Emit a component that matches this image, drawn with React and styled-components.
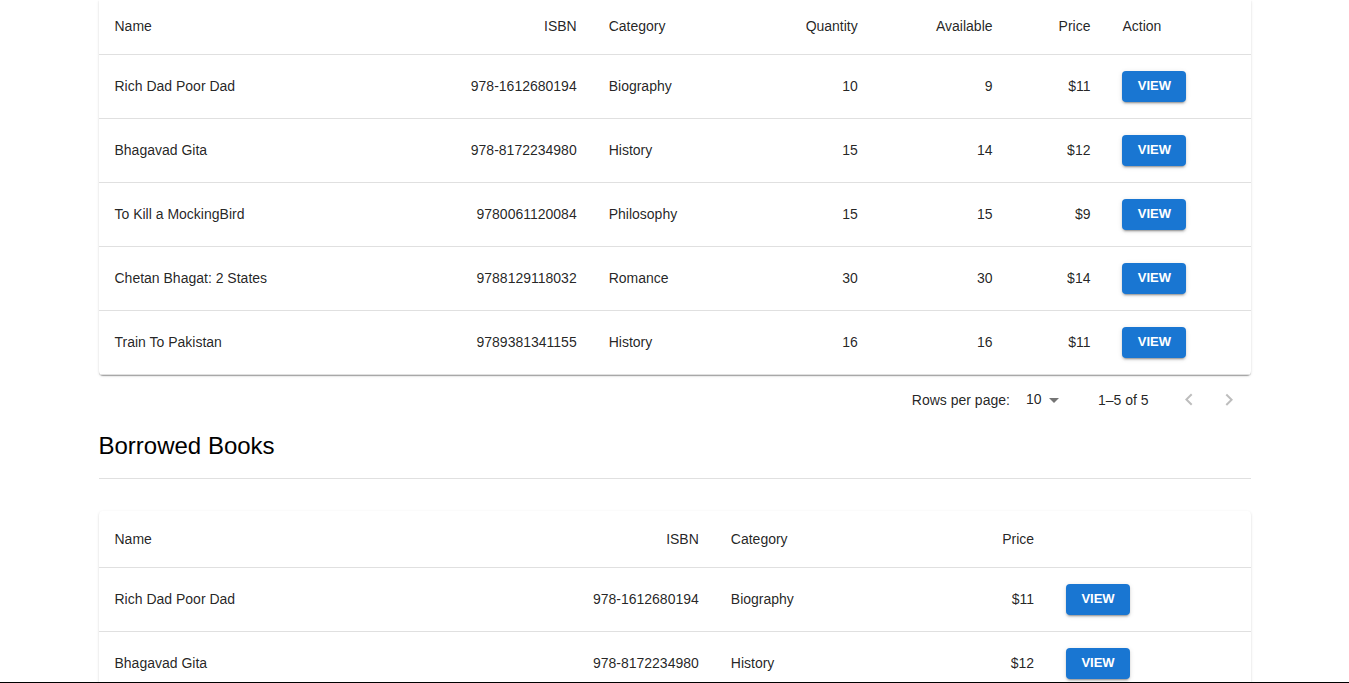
import React from "react";
import styled, { createGlobalStyle } from "styled-components";

const GlobalStyle = createGlobalStyle`
  *, *::before, *::after { box-sizing: border-box; }
  body {
    margin: 0;
    background: #fff;
    color: rgba(0, 0, 0, 0.87);
    font-family: "Liberation Sans", Arial, Helvetica, sans-serif;
    font-size: 14px;
    line-height: 20px;
  }
`;

const Screen = styled.div`
  height: 100vh;
  overflow: hidden;
  border-bottom: 1px solid #000;
`;

const Container = styled.main`
  max-width: 1200px;
  margin: 0 auto;
  padding: 0 24px;
`;

const Paper = styled.section`
  background: #fff;
  border-radius: ${(p) => (p.$flushTop ? "0 0 4px 4px" : "4px")};
  box-shadow:
    0 2px 1px -1px rgba(0, 0, 0, 0.2),
    0 1px 1px 0 rgba(0, 0, 0, 0.14),
    0 1px 3px 0 rgba(0, 0, 0, 0.12);
`;

const Table = styled.table`
  width: 100%;
  table-layout: fixed;
  border-collapse: separate;
  border-spacing: 0;
`;

const Column = styled.col`
  width: ${(p) => p.$width};
`;

const HeadCell = styled.th`
  padding: ${(p) => (p.$flushTop ? "14px" : "16px")} 16px 16px;
  border-bottom: 1px solid #e0e0e0;
  font-weight: 400;
  line-height: 24px;
  text-align: ${(p) => p.$align || "left"};
`;

const Cell = styled.td`
  padding: 14px 16px 16px;
  border-bottom: 1px solid #e0e0e0;
  vertical-align: middle;
  text-align: ${(p) => p.$align || "left"};
`;

const ActionCell = styled(Cell)`
  padding: 16px;
`;

const ViewButton = styled.button`
  display: block;
  min-width: 64px;
  padding: 4px 10px 5px;
  border: 0;
  border-radius: 4px;
  background: #1976d2;
  color: #fff;
  font-family: inherit;
  font-size: 13px;
  font-weight: 700;
  line-height: 22px;
  text-transform: uppercase;
  cursor: pointer;
  box-shadow:
    0 3px 1px -2px rgba(0, 0, 0, 0.2),
    0 2px 2px 0 rgba(0, 0, 0, 0.14),
    0 1px 5px 0 rgba(0, 0, 0, 0.12);
`;

const Pagination = styled.nav`
  display: flex;
  align-items: center;
  justify-content: flex-end;
  height: 50px;
  padding-right: 2px;
`;

const SelectBox = styled.div`
  position: relative;
  margin: 0 32px 0 8px;
`;

const RowsSelect = styled.select`
  display: block;
  appearance: none;
  width: 48px;
  padding: 1px 24px 3px 8px;
  border: 0;
  background: transparent;
  color: inherit;
  font: inherit;
  cursor: pointer;
`;

const SelectArrow = styled.svg`
  position: absolute;
  top: 0;
  right: 0;
  width: 24px;
  height: 24px;
  fill: rgba(0, 0, 0, 0.54);
  pointer-events: none;
`;

const PageButtons = styled.div`
  display: flex;
  margin-left: 20px;
`;

const PageButton = styled.button`
  display: flex;
  padding: 8px;
  border: 0;
  background: transparent;
  color: rgba(0, 0, 0, 0.26);
`;

const Icon = styled.svg`
  width: 24px;
  height: 24px;
  fill: currentColor;
`;

const Heading = styled.h2`
  margin: 0 0 32px;
  padding: 5px 0 16px;
  border-bottom: 1px solid #e0e0e0;
  color: #000;
  font-size: 24px;
  font-weight: 400;
  line-height: 32px;
`;

const catalogColumns = [
  { key: "name", label: "Name", width: "24.8%" },
  { key: "isbn", label: "ISBN", width: "18.1%", align: "right" },
  { key: "category", label: "Category", width: "12.5%" },
  { key: "quantity", label: "Quantity", width: "11.9%", align: "right" },
  { key: "available", label: "Available", width: "11.7%", align: "right" },
  { key: "price", label: "Price", width: "8.5%", align: "right" },
  { key: "action", label: "Action", width: "12.5%" },
];

const borrowedColumns = [
  { key: "name", label: "Name", width: "30%" },
  { key: "isbn", label: "ISBN", width: "23.5%", align: "right" },
  { key: "category", label: "Category", width: "16%" },
  { key: "price", label: "Price", width: "13.1%", align: "right" },
  { key: "action", label: "", width: "17.4%" },
];

const books = [
  { name: "Rich Dad Poor Dad", isbn: "978-1612680194", category: "Biography", quantity: 10, available: 9, price: "$11" },
  { name: "Bhagavad Gita", isbn: "978-8172234980", category: "History", quantity: 15, available: 14, price: "$12" },
  { name: "To Kill a MockingBird", isbn: "9780061120084", category: "Philosophy", quantity: 15, available: 15, price: "$9" },
  { name: "Chetan Bhagat: 2 States", isbn: "9788129118032", category: "Romance", quantity: 30, available: 30, price: "$14" },
  { name: "Train To Pakistan", isbn: "9789381341155", category: "History", quantity: 16, available: 16, price: "$11" },
];

function BookTable({ columns, rows, flushTop }) {
  return (
    <Paper $flushTop={flushTop}>
      <Table>
        <colgroup>
          {columns.map((c) => (
            <Column key={c.key} $width={c.width} />
          ))}
        </colgroup>
        <thead>
          <tr>
            {columns.map((c) => (
              <HeadCell
                key={c.key}
                as={c.label ? undefined : "td"}
                scope={c.label ? "col" : undefined}
                $align={c.align}
                $flushTop={flushTop}
              >
                {c.label}
              </HeadCell>
            ))}
          </tr>
        </thead>
        <tbody>
          {rows.map((row) => (
            <tr key={row.isbn}>
              {columns.map((c) =>
                c.key === "action" ? (
                  <ActionCell key={c.key}>
                    <ViewButton type="button">View</ViewButton>
                  </ActionCell>
                ) : (
                  <Cell key={c.key} $align={c.align}>
                    {row[c.key]}
                  </Cell>
                )
              )}
            </tr>
          ))}
        </tbody>
      </Table>
    </Paper>
  );
}

export default function App() {
  return (
    <Screen>
      <GlobalStyle />
      <Container>
        <BookTable columns={catalogColumns} rows={books} flushTop />
        <Pagination aria-label="Table pages">
          <label htmlFor="rows-per-page">Rows per page:</label>
          <SelectBox>
            <RowsSelect id="rows-per-page" defaultValue="10">
              <option value="10">10</option>
              <option value="25">25</option>
              <option value="50">50</option>
            </RowsSelect>
            <SelectArrow viewBox="0 0 24 24" aria-hidden="true">
              <path d="M7 10l5 5 5-5z" />
            </SelectArrow>
          </SelectBox>
          <span>1–5 of 5</span>
          <PageButtons>
            <PageButton type="button" disabled aria-label="Previous page">
              <Icon viewBox="0 0 24 24" aria-hidden="true">
                <path d="M15.41 16.09l-4.58-4.59 4.58-4.59L14 5.5l-6 6 6 6z" />
              </Icon>
            </PageButton>
            <PageButton type="button" disabled aria-label="Next page">
              <Icon viewBox="0 0 24 24" aria-hidden="true">
                <path d="M8.59 16.34l4.58-4.59-4.58-4.59L10 5.75l6 6-6 6z" />
              </Icon>
            </PageButton>
          </PageButtons>
        </Pagination>
        <Heading>Borrowed Books</Heading>
        <BookTable columns={borrowedColumns} rows={books.slice(0, 2)} />
      </Container>
    </Screen>
  );
}
